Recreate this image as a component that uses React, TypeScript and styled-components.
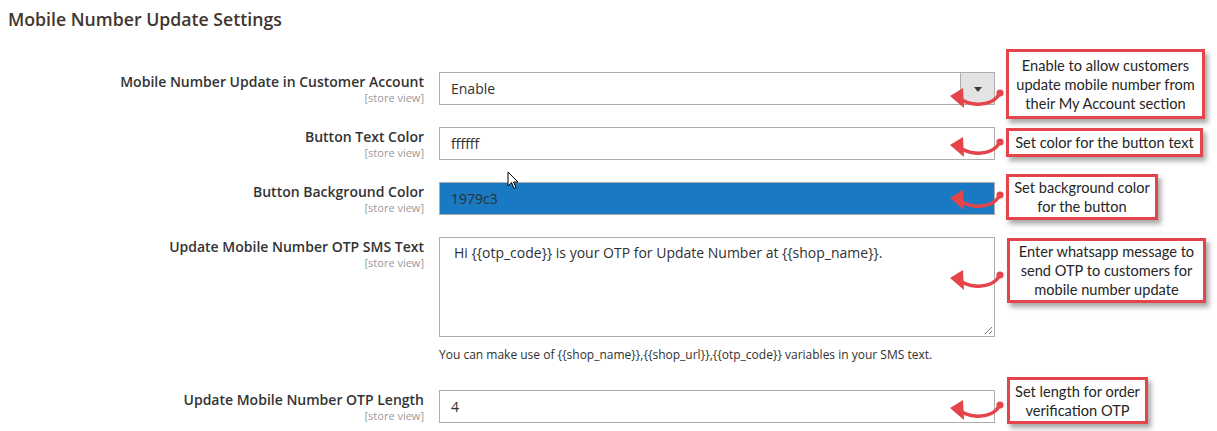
import React from "react";
import styled, { createGlobalStyle } from "styled-components";

const Global = createGlobalStyle`
  html, body { margin: 0; padding: 0; background: #fff; }
  body { font-family: "Open Sans", "Noto Sans", sans-serif; color: #303030; }
  * { box-sizing: border-box; }
`;

const Page = styled.div`
  position: relative;
  width: 1217px;
  height: 431px;
  overflow: hidden;
`;

const Title = styled.h2`
  margin: 0;
  padding: 8px 0 0 8px;
  height: 72px;
  font-size: 17.7px;
  font-weight: 600;
  color: #41362f;
  line-height: 23px;
`;

const Rows = styled.div`
  display: flex;
  flex-direction: column;
`;

const Row = styled.div<{ $gap: number }>`
  display: grid;
  grid-template-columns: 424px 556px;
  column-gap: 15px;
  margin-bottom: ${(p) => p.$gap}px;
`;

const LabelCell = styled.div`
  text-align: right;
  padding-top: 1px;
`;

const LabelText = styled.div`
  font-size: 14px;
  font-weight: 600;
  color: #333;
  line-height: 18px;
`;

const Scope = styled.div`
  font-size: 11px;
  color: #999;
  line-height: 13px;
`;

const Control = styled.div`
  position: relative;
`;

const Field = styled.div<{ $bg?: string }>`
  height: 33px;
  border: 1px solid #adadad;
  background: ${(p) => p.$bg || "#fff"};
  display: flex;
  align-items: center;
  padding: 0 11px;
  font-size: 14px;
  color: #303030;
`;

const SelectBox = styled(Field)`
  padding-right: 0;
  justify-content: space-between;
`;

const SelectButton = styled.div`
  width: 34px;
  align-self: stretch;
  background: #e3e3e3;
  border-left: 1px solid #adadad;
  display: flex;
  align-items: center;
  justify-content: center;
  &::after {
    content: "";
    border-left: 4px solid transparent;
    border-right: 4px solid transparent;
    border-top: 5px solid #41362f;
    margin-top: 1px;
  }
`;

const TextArea = styled.div`
  height: 100px;
  border: 1px solid #adadad;
  padding: 5px 14px;
  font-size: 14px;
  line-height: 20px;
  color: #303030;
  position: relative;
`;

const Grip = styled.svg`
  position: absolute;
  right: 1px;
  bottom: 1px;
`;

const Note = styled.div`
  font-size: 12px;
  color: #303030;
  margin-top: 10px;
  line-height: 16px;
`;

const Callout = styled.div<{ $top: number; $w: number; $h: number; $left: number }>`
  position: absolute;
  left: ${(p) => p.$left}px;
  top: ${(p) => p.$top}px;
  width: ${(p) => p.$w}px;
  height: ${(p) => p.$h}px;
  border: 3px solid #e5454a;
  background: #fff;
  box-shadow: 3px 4px 5px rgba(0, 0, 0, 0.35);
  display: flex;
  align-items: center;
  justify-content: center;
  text-align: center;
  font-family: "Lato", "Noto Sans", sans-serif;
  font-weight: 400;
  font-size: 14.6px;
  line-height: 19px;
  color: #262626;
  padding: 0 2px;
`;

const ArrowSvg = styled.svg<{ $top: number }>`
  position: absolute;
  left: 506px;
  top: ${(p) => p.$top}px;
  overflow: visible;
`;

const Cursor = styled.svg`
  position: absolute;
  left: 507px;
  top: 171px;
`;

function Arrow({ top }: { top: number }) {
  return (
    <ArrowSvg $top={top} width="62" height="28" viewBox="0 0 62 28">
      <path d="M55 8 C 50 17, 42 20, 30 19 C 24 18.5, 20 17, 15 14" fill="none" stroke="#e5454a" strokeWidth="3.5" strokeLinecap="round" />
      <circle cx="55" cy="8" r="3.6" fill="#e5454a" />
      <polygon points="5,11 18,3 19,23" fill="#e5454a" />
    </ArrowSvg>
  );
}

export default function App() {
  return (
    <Page>
      <Global />
      <Title>Mobile Number Update Settings</Title>
      <Rows>
        <Row $gap={22}>
          <LabelCell>
            <LabelText>Mobile Number Update in Customer Account</LabelText>
            <Scope>[store view]</Scope>
          </LabelCell>
          <Control>
            <SelectBox>
              <span>Enable</span>
              <SelectButton />
            </SelectBox>
            <Arrow top={13} />
            <Callout $left={567} $top={-23} $w={199} $h={70}>
              Enable to allow customers update mobile number from their My Account section
            </Callout>
          </Control>
        </Row>
        <Row $gap={22}>
          <LabelCell>
            <LabelText>Button Text Color</LabelText>
            <Scope>[store view]</Scope>
          </LabelCell>
          <Control>
            <Field>ffffff</Field>
            <Arrow top={7} />
            <Callout $left={567} $top={1} $w={197} $h={29}>
              Set color for the button text
            </Callout>
          </Control>
        </Row>
        <Row $gap={22}>
          <LabelCell>
            <LabelText>Button Background Color</LabelText>
            <Scope>[store view]</Scope>
          </LabelCell>
          <Control>
            <Field $bg="#1979c3">1979c3</Field>
            <Arrow top={5} />
            <Callout $left={567} $top={-8} $w={152} $h={46}>
              Set background color for the button
            </Callout>
          </Control>
        </Row>
        <Row $gap={27}>
          <LabelCell>
            <LabelText>Update Mobile Number OTP SMS Text</LabelText>
            <Scope>[store view]</Scope>
          </LabelCell>
          <Control>
            <TextArea>
              Hi {"{{otp_code}}"} is your OTP for Update Number at {"{{shop_name}}"}.
              <Grip width="10" height="10" viewBox="0 0 10 10">
                <path d="M9 2 L2 9 M9 6 L6 9" stroke="#777" strokeWidth="1" />
              </Grip>
            </TextArea>
            <Note>
              You can make use of {"{{shop_name}}"},{"{{shop_url}}"},{"{{otp_code}}"} variables in your SMS text.
            </Note>
            <Arrow top={30} />
            <Callout $left={568} $top={1} $w={199} $h={65}>
              Enter whatsapp message to send OTP to customers for mobile number update
            </Callout>
          </Control>
        </Row>
        <Row $gap={0}>
          <LabelCell>
            <LabelText>Update Mobile Number OTP Length</LabelText>
            <Scope>[store view]</Scope>
          </LabelCell>
          <Control>
            <Field>4</Field>
            <Arrow top={7} />
            <Callout $left={568} $top={-13} $w={141} $h={47}>
              Set length for order verification OTP
            </Callout>
          </Control>
        </Row>
      </Rows>
      <Cursor width="13" height="20" viewBox="0 0 13 20">
        <path d="M1 1 L1 15 L4.5 11.5 L7 17.5 L9 16.6 L6.6 11 L11 11 Z" fill="#fff" stroke="#000" strokeWidth="1" strokeLinejoin="round" />
      </Cursor>
    </Page>
  );
}
